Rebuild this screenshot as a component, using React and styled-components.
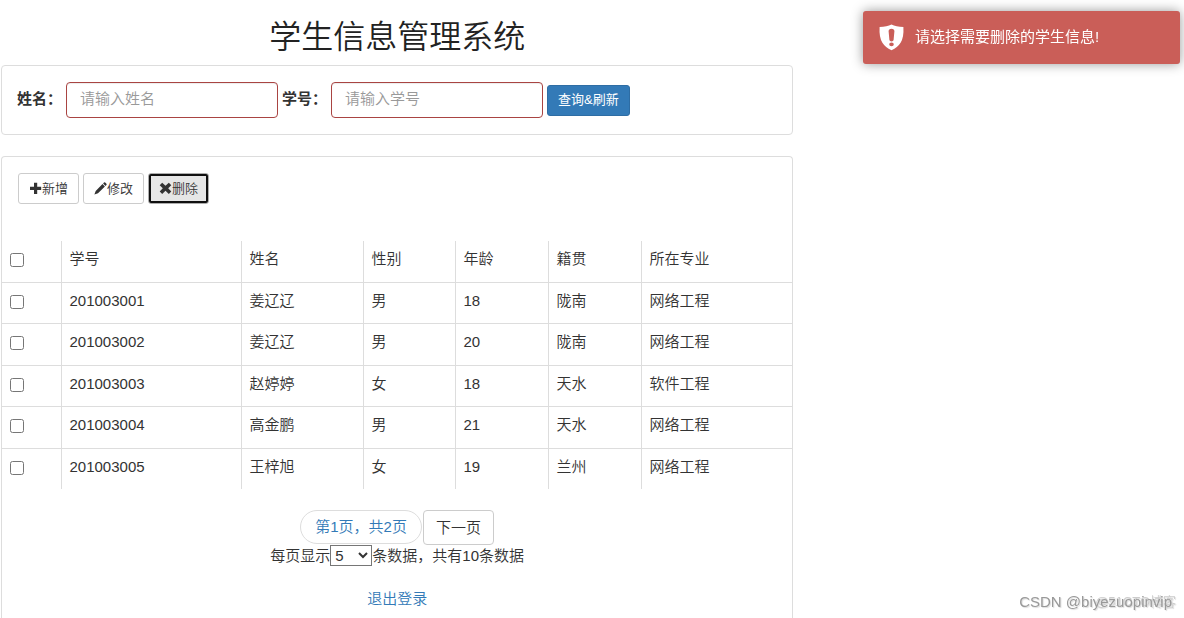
import React, { useState } from 'react';
import styled, { createGlobalStyle } from 'styled-components';

const GlobalStyle = createGlobalStyle`
    * {
        box-sizing: border-box;
    }
    body {
        margin: 0;
        background: #fff;
        color: #333;
        font-family: "Liberation Sans", "Noto Sans CJK SC", sans-serif;
        font-size: 15px;
        font-weight: 350;
        line-height: 21px;
    }
    button, input, select {
        font-family: inherit;
        font-weight: inherit;
    }
    a {
        color: #337ab7;
        text-decoration: none;
    }
`

const Page = styled.div`
    display: flex;
    flex-direction: column;
    width: 67%;
    min-height: 100vh;
    padding-left: 1px;
`

const Title = styled.h1`
    margin: 0;
    padding: 17px 0 8px;
    font-size: 32px;
    font-weight: 350;
    line-height: 40px;
    text-align: center;
    color: #222;
`

const SearchPanel = styled.form`
    display: flex;
    align-items: center;
    gap: 4px;
    margin-bottom: 21px;
    padding: 16px 15px;
    border: 1px solid #ddd;
    border-radius: 4px;
`

const Label = styled.label`
    padding-bottom: 4px;
    font-weight: bold;
    white-space: nowrap;
`

const TextInput = styled.input`
    width: 212px;
    height: 36px;
    padding: 0 13px 3px;
    border: 1px solid #a94442;
    border-radius: 4px;
    font-size: 15px;
    color: #555;
    box-shadow: inset 0 1px 1px rgba(0, 0, 0, 0.075);
    &::placeholder {
        color: #999;
    }
`

const Button = styled.button`
    display: inline-flex;
    align-items: center;
    height: 31px;
    padding: 0 10px;
    border: 1px solid ${props => (props.$primary ? '#2e6da4' : '#ccc')};
    border-radius: 3px;
    background: ${props => (props.$primary ? '#337ab7' : '#fff')};
    color: ${props => (props.$primary ? '#fff' : '#333')};
    font-size: 13px;
    font-weight: ${props => (props.$primary ? '400' : '350')};
    line-height: 20px;
    white-space: nowrap;
    cursor: pointer;
    ${props => props.$active && `
        background: #e6e6e6;
        border-color: #adadad;
        outline: 2px solid #101010;
        outline-offset: -3px;
    `}
`

const ListPanel = styled.section`
    flex: 1;
    border: 1px solid #ddd;
    border-bottom: 0;
    border-radius: 4px 4px 0 0;
`

const Toolbar = styled.div`
    display: flex;
    gap: 4px;
    padding: 16px 16px 37px;
`

const Table = styled.table`
    width: 100%;
    table-layout: fixed;
    border-collapse: collapse;
`

const Col = styled.col`
    width: ${props => props.$width};
`

const Cell = styled.td`
    height: 41px;
    padding: 0 8px 5px;
    border-left: 1px solid #ddd;
    border-top: 1px solid #ddd;
    font-weight: 350;
    text-align: left;
    &:first-child {
        border-left: 0;
    }
    thead & {
        border-top: 0;
    }
    tbody tr:nth-child(even) & {
        height: 42px;
    }
`

const Checkbox = styled.input`
    display: block;
    width: 14px;
    height: 14px;
    margin: 3px 0 0;
`

const Footer = styled.div`
    display: flex;
    flex-direction: column;
    align-items: center;
    padding: 21px 0 0;
`

const Pager = styled.div`
    display: flex;
    gap: 1px;
`

const PageInfo = styled.a`
    height: 34px;
    padding: 5px 14px;
    border: 1px solid #ddd;
    border-radius: 17px;
`

const NextButton = styled.button`
    height: 35px;
    padding: 0 12px 3px;
    border: 1px solid #ccc;
    border-radius: 4px;
    background: #fff;
    color: #333;
    font-size: 15px;
    cursor: pointer;
`

const PageSize = styled.div`
    display: flex;
    align-items: center;
    margin-bottom: 22px;
`

const Select = styled.select`
    width: 42px;
    height: 21px;
    padding: 0;
    border: 1px solid #767676;
    background: #fff;
    color: #333;
    font-size: 15px;
`

const Toast = styled.div`
    position: fixed;
    top: 11px;
    right: 4px;
    display: flex;
    align-items: center;
    gap: 11px;
    width: 317px;
    padding: 13px 16px;
    border-radius: 3px;
    background: #ca5e58;
    color: #fff;
    font-weight: 400;
    box-shadow: 0 0 12px #999;
`

const ToastText = styled.span`
    padding-bottom: 2px;
`

const Watermark = styled.div`
    position: fixed;
    right: ${props => (props.$faint ? '8px' : '12px')};
    bottom: 6px;
    color: ${props => (props.$faint ? '#ccc' : '#999')};
    font-size: ${props => (props.$faint ? '13px' : '15px')};
    text-shadow: 1px 1px 1px #ddd;
`

const columns = ['学号', '姓名', '性别', '年龄', '籍贯', '所在专业'];
const widths = ['59px', '180px', '122px', '92px', '93px', '93px', 'auto'];

const students = [
    ['201003001', '姜辽辽', '男', '18', '陇南', '网络工程'],
    ['201003002', '姜辽辽', '男', '20', '陇南', '网络工程'],
    ['201003003', '赵婷婷', '女', '18', '天水', '软件工程'],
    ['201003004', '高金鹏', '男', '21', '天水', '网络工程'],
    ['201003005', '王梓旭', '女', '19', '兰州', '网络工程'],
];

function PlusIcon()
{
    return (
        <svg width="13" height="13" viewBox="0 0 13 13" fill="currentColor">
            <path d="M5 0.8h3.2v4h4v3.2h-4v4H5V8H1V4.8h4z" />
        </svg>
    );
}

function PencilIcon()
{
    return (
        <svg width="13" height="13" viewBox="0 0 13 13" fill="currentColor">
            <path d="M10 0.6Q10.6 0 11.2 0.6L12.4 1.8Q13 2.4 12.4 3L11.5 3.9L9.1 1.5zM8.5 2.1L10.9 4.5L4 11.3L0.4 12.6L1.7 8.9z" />
        </svg>
    );
}

function RemoveIcon()
{
    return (
        <svg width="13" height="13" viewBox="0 0 13 13" fill="currentColor">
            <path d="M3.2 0.7L6.5 3.8L9.8 0.7L12.3 3.2L9.2 6.3L12.3 9.4L9.8 11.9L6.5 8.8L3.2 11.9L0.7 9.4L3.8 6.3L0.7 3.2z" />
        </svg>
    );
}

function ShieldIcon()
{
    return (
        <svg width="25" height="27" viewBox="0 0 25 27" fill="#fff">
            <path fillRule="evenodd" d="M12.5 0.6Q17 3 24.4 3Q25 13.5 21.6 18.7Q18.6 23.4 12.5 26.2Q6.4 23.4 3.4 18.7Q0 13.5 0.6 3Q8 3 12.5 0.6zM12.5 4.7Q9.6 4.7 9.6 7.2L10.4 16Q10.6 17.4 12.5 17.4Q14.4 17.4 14.6 16L15.4 7.2Q15.4 4.7 12.5 4.7zM12.5 18.4Q10.2 18.4 10.2 20.3Q10.2 22.2 12.5 22.2Q14.8 22.2 14.8 20.3Q14.8 18.4 12.5 18.4z" />
        </svg>
    );
}

function App()
{
    const [size, setSize] = useState('5');

    return (
        <>
            <GlobalStyle />
            <Page>
                <Title>学生信息管理系统</Title>
                <SearchPanel onSubmit={e => e.preventDefault()}>
                    <Label htmlFor="name">姓名：</Label>
                    <TextInput id="name" type="text" placeholder="请输入姓名" />
                    <Label htmlFor="number">学号：</Label>
                    <TextInput id="number" type="text" placeholder="请输入学号" />
                    <Button type="submit" $primary>查询&amp;刷新</Button>
                </SearchPanel>
                <ListPanel>
                    <Toolbar>
                        <Button type="button"><PlusIcon />新增</Button>
                        <Button type="button"><PencilIcon />修改</Button>
                        <Button type="button" $active><RemoveIcon />删除</Button>
                    </Toolbar>
                    <Table>
                        <colgroup>
                            {widths.map((width, i) => <Col key={i} $width={width} />)}
                        </colgroup>
                        <thead>
                            <tr>
                                <Cell as="th"><Checkbox type="checkbox" aria-label="全选" /></Cell>
                                {columns.map(name => <Cell as="th" key={name}>{name}</Cell>)}
                            </tr>
                        </thead>
                        <tbody>
                            {students.map(student => (
                                <tr key={student[0]}>
                                    <Cell><Checkbox type="checkbox" aria-label={student[0]} /></Cell>
                                    {student.map((value, i) => <Cell key={i}>{value}</Cell>)}
                                </tr>
                            ))}
                        </tbody>
                    </Table>
                    <Footer>
                        <Pager>
                            <PageInfo href="#">第1页，共2页</PageInfo>
                            <NextButton type="button">下一页</NextButton>
                        </Pager>
                        <PageSize>
                            <label htmlFor="size">每页显示</label>
                            <Select id="size" value={size} onChange={e => setSize(e.target.value)}>
                                <option>5</option>
                                <option>10</option>
                                <option>20</option>
                            </Select>
                            <span>条数据，共有10条数据</span>
                        </PageSize>
                        <a href="#">退出登录</a>
                    </Footer>
                </ListPanel>
            </Page>
            <Toast role="alert">
                <ShieldIcon />
                <ToastText>请选择需要删除的学生信息!</ToastText>
            </Toast>
            <Watermark $faint>@51CTO博客</Watermark>
            <Watermark>CSDN @biyezuopinvip</Watermark>
        </>
    );
}

export default App;
